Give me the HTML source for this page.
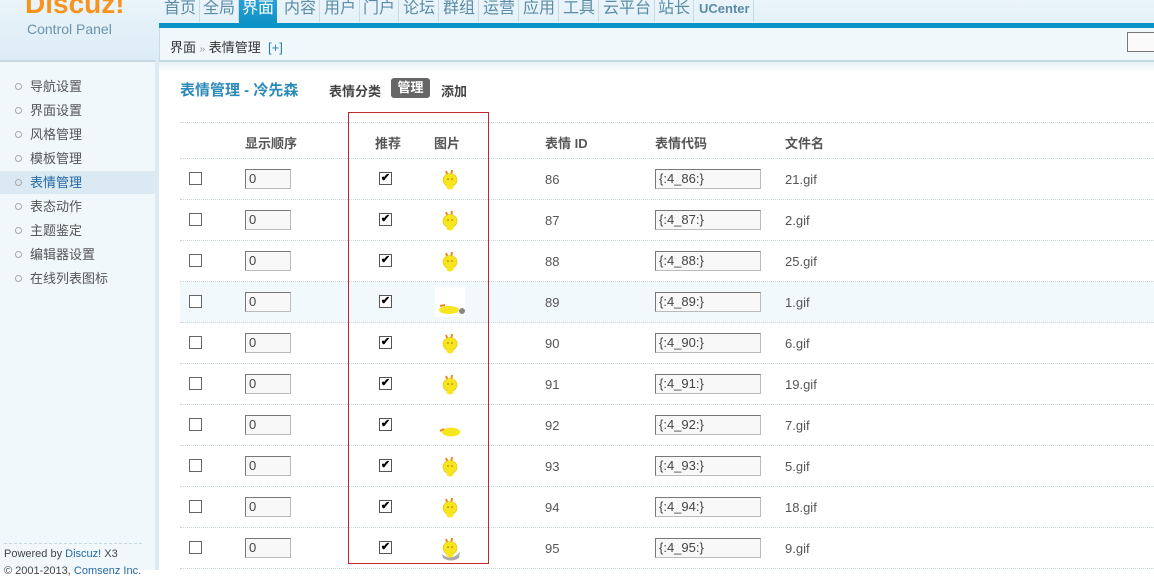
<!DOCTYPE html>
<html><head><meta charset="utf-8">
<style>
*{margin:0;padding:0;box-sizing:border-box}
body{width:1154px;height:570px;overflow:hidden;position:relative;background:#fff;font-family:"Liberation Sans","Noto Sans CJK SC",sans-serif;font-size:12px;color:#333}
.a{position:absolute;white-space:nowrap}
#hd{left:0;top:0;width:1154px;height:60px;background:linear-gradient(#eaf4fa,#dcecf6)}
#logo{left:25px;top:-12px;font:bold 28px "Liberation Sans",sans-serif;color:#f7941d}
#cp{left:27px;top:21px;font-size:14px;color:#6a93a8}
.nav{top:-1px;font-size:16px;color:#5b8ca6;height:23px;line-height:20px;padding:0 3px;border-right:1px solid #c6dbe6}
#bar{left:159px;top:23px;width:995px;height:5px;background:#0a93c6}
#bc{left:159px;top:28px;width:995px;height:32px;background:#f0f8fc;border-left:1px solid #c5dde8}
#bcb{left:159px;top:60px;width:995px;height:2px;background:#c6d9e0}
#bcg{left:159px;top:62px;width:995px;height:10px;background:linear-gradient(#e8f2f7,#fff)}
#sb{left:0;top:60px;width:155px;height:510px;background:#f0f8fc;border-top:2px solid #c6d9e0}
#sbr{left:155px;top:60px;width:4px;height:510px;background:#dbeaf3}
.si{left:0;width:155px;height:23px;line-height:23px;padding-left:30px;font-size:13px;color:#555}
.si:before{content:"";position:absolute;left:15px;top:8px;width:5px;height:5px;border:1px solid #aaa;border-radius:50%}
.cb{width:13px;height:13px;border:1px solid #666;background:#fff}
.ck{width:13px;height:13px;border:1px solid #555;background:#fff;font-size:11px;line-height:11px;text-align:center;font-weight:bold;color:#000}
.in{height:20px;border:1px solid #bbb;border-top-color:#777;border-left-color:#777;background:#f8f8f8;font-size:13px;line-height:18px;padding-left:3px;color:#444}
.dl{left:180px;width:974px;height:0;border-top:1px dotted #c8d6dc}
.tx{font-size:13px;color:#555}
.th{font-size:13px;font-weight:bold;color:#555}
</style></head><body>
<div class="a" id="hd"></div>
<div class="a" id="logo">Discuz!</div>
<div class="a" id="cp">Control Panel</div>
<div class="a nav" style="left:161px">首页</div>
<div class="a nav" style="left:200px">全局</div>
<div class="a nav" style="left:239px;background:linear-gradient(#2aa3d6,#0a8ec2);color:#fff;height:28px;border:none">界面</div>
<div class="a nav" style="left:281px">内容</div>
<div class="a nav" style="left:321px">用户</div>
<div class="a nav" style="left:360px">门户</div>
<div class="a nav" style="left:400px">论坛</div>
<div class="a nav" style="left:440px">群组</div>
<div class="a nav" style="left:480px">运营</div>
<div class="a nav" style="left:520px">应用</div>
<div class="a nav" style="left:560px">工具</div>
<div class="a nav" style="left:600px">云平台</div>
<div class="a nav" style="left:655px">站长</div>
<div class="a nav" style="left:696px;font-size:13px;font-weight:bold">UCenter</div>
<div class="a" id="bar"></div>
<div class="a" id="bc"></div>
<div class="a" style="left:170px;top:37px;font-size:13px;color:#333">界面 <span style="color:#999;font-size:10px">»</span> 表情管理 &nbsp;<span style="color:#2b7db0">[+]</span></div>
<div class="a" style="left:1127px;top:32px;width:30px;height:20px;border:1px solid #777;background:#fafafa"></div>
<div class="a" id="bcb"></div>
<div class="a" id="bcg"></div>
<div class="a" id="sb"></div>
<div class="a" id="sbr"></div>
<div class="a si" style="top:75px">导航设置</div>
<div class="a si" style="top:99px">界面设置</div>
<div class="a si" style="top:123px">风格管理</div>
<div class="a si" style="top:147px">模板管理</div>
<div class="a si" style="top:171px;background:#dbe9f3;color:#2468a2">表情管理</div>
<div class="a si" style="top:195px">表态动作</div>
<div class="a si" style="top:219px">主题鉴定</div>
<div class="a si" style="top:243px">编辑器设置</div>
<div class="a si" style="top:267px">在线列表图标</div>
<div class="a" style="left:4px;top:543px;width:138px;border-top:1px dashed #c8d8e0"></div>
<div class="a" style="left:4px;top:548px;font-size:11px;color:#444">Powered by <span style="color:#2468a2">Discuz!</span> X3</div>
<div class="a" style="left:4px;top:565px;font-size:11px;color:#444">© 2001-2013, <span style="color:#2468a2">Comsenz Inc.</span></div>

<div class="a" style="left:180px;top:79px;font-size:15px;font-weight:bold;color:#2b8ab8">表情管理 - 冷先森</div>
<div class="a" style="left:329px;top:81px;font-size:13px;font-weight:bold;color:#444">表情分类</div>
<div class="a" style="left:391px;top:78px;width:39px;height:20px;background:#666;border-radius:3px;color:#fff;font-weight:bold;font-size:13px;text-align:center;line-height:20px">管理</div>
<div class="a" style="left:441px;top:81px;font-size:13px;font-weight:bold;color:#444">添加</div>

<div class="a" style="left:180px;top:282px;width:974px;height:41px;background:#f2f9fd"></div>
<div class="a dl" style="top:122px"></div>
<div class="a th" style="left:245px;top:133px">显示顺序</div>
<div class="a th" style="left:375px;top:133px">推荐</div>
<div class="a th" style="left:434px;top:133px">图片</div>
<div class="a th" style="left:545px;top:133px">表情 ID</div>
<div class="a th" style="left:655px;top:133px">表情代码</div>
<div class="a th" style="left:785px;top:133px">文件名</div>

<svg width="0" height="0" style="position:absolute"><defs>
<g id="chick"><path d="M5 3 L7 8 M11 2 L10 8" stroke="#e8891c" stroke-width="2"/><ellipse cx="9" cy="12" rx="7" ry="6.5" fill="#f7e51e" stroke="#e6c200" stroke-width=".6"/><ellipse cx="9" cy="19" rx="3.5" ry="2.5" fill="#f7e51e"/><circle cx="7" cy="11" r=".8" fill="#a06a00"/><circle cx="11" cy="11" r=".8" fill="#a06a00"/></g>
</defs></svg>

<div class="a" style="left:348px;top:112px;width:141px;height:452px;border:1px solid #c0272d"></div>

<div class="a dl" style="top:158px"></div>
<div class="a cb" style="left:189px;top:172px"></div><div class="a in" style="left:245px;top:169px;width:46px">0</div><div class="a ck" style="left:379px;top:172px">✔</div><svg class="a" style="left:441px;top:168px" width="18" height="24"><use href="#chick"/></svg><div class="a tx" style="left:545px;top:172px">86</div><div class="a in" style="left:655px;top:169px;width:106px">{:4_86:}</div><div class="a tx" style="left:785px;top:172px">21.gif</div>
<div class="a dl" style="top:199px"></div>
<div class="a cb" style="left:189px;top:213px"></div><div class="a in" style="left:245px;top:210px;width:46px">0</div><div class="a ck" style="left:379px;top:213px">✔</div><svg class="a" style="left:441px;top:209px" width="18" height="24"><use href="#chick"/></svg><div class="a tx" style="left:545px;top:213px">87</div><div class="a in" style="left:655px;top:210px;width:106px">{:4_87:}</div><div class="a tx" style="left:785px;top:213px">2.gif</div>
<div class="a dl" style="top:240px"></div>
<div class="a cb" style="left:189px;top:254px"></div><div class="a in" style="left:245px;top:251px;width:46px">0</div><div class="a ck" style="left:379px;top:254px">✔</div><svg class="a" style="left:441px;top:250px" width="18" height="24"><use href="#chick"/></svg><div class="a tx" style="left:545px;top:254px">88</div><div class="a in" style="left:655px;top:251px;width:106px">{:4_88:}</div><div class="a tx" style="left:785px;top:254px">25.gif</div>
<div class="a dl" style="top:281px"></div>
<div class="a cb" style="left:189px;top:295px"></div><div class="a in" style="left:245px;top:292px;width:46px">0</div><div class="a ck" style="left:379px;top:295px">✔</div><div class="a" style="left:435px;top:287px;width:30px;height:30px;background:#fff"></div><svg class="a" style="left:436px;top:300px" width="30" height="16"><ellipse cx="13" cy="10" rx="10" ry="4" fill="#f7e51e"/><circle cx="26" cy="11" r="3" fill="#888"/><path d="M4 6 L9 5" stroke="#e8891c" stroke-width="2"/></svg><div class="a tx" style="left:545px;top:295px">89</div><div class="a in" style="left:655px;top:292px;width:106px">{:4_89:}</div><div class="a tx" style="left:785px;top:295px">1.gif</div>
<div class="a dl" style="top:322px"></div>
<div class="a cb" style="left:189px;top:336px"></div><div class="a in" style="left:245px;top:333px;width:46px">0</div><div class="a ck" style="left:379px;top:336px">✔</div><svg class="a" style="left:441px;top:332px" width="18" height="24"><use href="#chick"/></svg><div class="a tx" style="left:545px;top:336px">90</div><div class="a in" style="left:655px;top:333px;width:106px">{:4_90:}</div><div class="a tx" style="left:785px;top:336px">6.gif</div>
<div class="a dl" style="top:363px"></div>
<div class="a cb" style="left:189px;top:377px"></div><div class="a in" style="left:245px;top:374px;width:46px">0</div><div class="a ck" style="left:379px;top:377px">✔</div><svg class="a" style="left:441px;top:373px" width="18" height="24"><use href="#chick"/></svg><div class="a tx" style="left:545px;top:377px">91</div><div class="a in" style="left:655px;top:374px;width:106px">{:4_91:}</div><div class="a tx" style="left:785px;top:377px">19.gif</div>
<div class="a dl" style="top:404px"></div>
<div class="a cb" style="left:189px;top:418px"></div><div class="a in" style="left:245px;top:415px;width:46px">0</div><div class="a ck" style="left:379px;top:418px">✔</div><svg class="a" style="left:437px;top:422px" width="28" height="16"><ellipse cx="14" cy="10" rx="9" ry="4.5" fill="#f7e51e"/><path d="M3 9 L7 7" stroke="#e8891c" stroke-width="2"/></svg><div class="a tx" style="left:545px;top:418px">92</div><div class="a in" style="left:655px;top:415px;width:106px">{:4_92:}</div><div class="a tx" style="left:785px;top:418px">7.gif</div>
<div class="a dl" style="top:445px"></div>
<div class="a cb" style="left:189px;top:459px"></div><div class="a in" style="left:245px;top:456px;width:46px">0</div><div class="a ck" style="left:379px;top:459px">✔</div><svg class="a" style="left:441px;top:455px" width="18" height="24"><use href="#chick"/></svg><div class="a tx" style="left:545px;top:459px">93</div><div class="a in" style="left:655px;top:456px;width:106px">{:4_93:}</div><div class="a tx" style="left:785px;top:459px">5.gif</div>
<div class="a dl" style="top:486px"></div>
<div class="a cb" style="left:189px;top:500px"></div><div class="a in" style="left:245px;top:497px;width:46px">0</div><div class="a ck" style="left:379px;top:500px">✔</div><svg class="a" style="left:441px;top:496px" width="18" height="24"><use href="#chick"/></svg><div class="a tx" style="left:545px;top:500px">94</div><div class="a in" style="left:655px;top:497px;width:106px">{:4_94:}</div><div class="a tx" style="left:785px;top:500px">18.gif</div>
<div class="a dl" style="top:527px"></div>
<div class="a cb" style="left:189px;top:541px"></div><div class="a in" style="left:245px;top:538px;width:46px">0</div><div class="a ck" style="left:379px;top:541px">✔</div><svg class="a" style="left:439px;top:536px" width="24" height="26"><use href="#chick" x="2"/><path d="M3 18 Q12 26 21 16 L20 22 Q12 27 4 22Z" fill="#aaa"/></svg><div class="a tx" style="left:545px;top:541px">95</div><div class="a in" style="left:655px;top:538px;width:106px">{:4_95:}</div><div class="a tx" style="left:785px;top:541px">9.gif</div>
<div class="a dl" style="top:568px"></div>
</body></html>
